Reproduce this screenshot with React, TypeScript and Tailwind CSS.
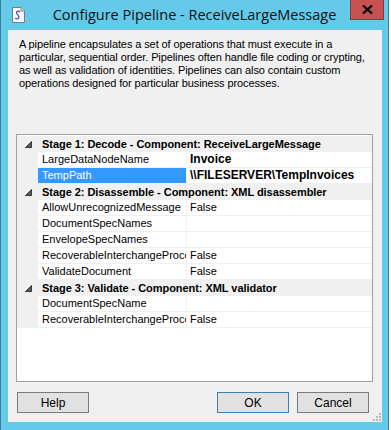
import React from "react";

type Row =
  | { kind: "h"; text: string }
  | { kind: "p"; name: string; value: string; bold?: boolean; sel?: boolean };

const rows: Row[] = [
  { kind: "h", text: "Stage 1: Decode - Component: ReceiveLargeMessage" },
  { kind: "p", name: "LargeDataNodeName", value: "Invoice", bold: true },
  { kind: "p", name: "TempPath", value: "\\\\FILESERVER\\TempInvoices", bold: true, sel: true },
  { kind: "h", text: "Stage 2: Disassemble - Component: XML disassembler" },
  { kind: "p", name: "AllowUnrecognizedMessage", value: "False" },
  { kind: "p", name: "DocumentSpecNames", value: "" },
  { kind: "p", name: "EnvelopeSpecNames", value: "" },
  { kind: "p", name: "RecoverableInterchangeProce", value: "False" },
  { kind: "p", name: "ValidateDocument", value: "False" },
  { kind: "h", text: "Stage 3: Validate - Component: XML validator" },
  { kind: "p", name: "DocumentSpecName", value: "" },
  { kind: "p", name: "RecoverableInterchangeProce", value: "False" },
];

function Tri() {
  return (
    <svg width="7" height="7" viewBox="0 0 7 7">
      <polygon points="6.5,0.5 6.5,6.5 0.5,6.5" fill="#5a5a5a" stroke="#3a3a3a" strokeWidth="1" />
    </svg>
  );
}

function DocIcon() {
  return (
    <svg width="13" height="16" viewBox="0 0 13 16">
      <path d="M0.5 0.5 H9 L12.5 4 V15.5 H0.5 Z" fill="#f4f7fb" stroke="#6f7f96" />
      <path d="M9 0.5 V4 H12.5" fill="#dfe6ee" stroke="#6f7f96" />
      <path d="M8 5 C6 3.5 3.5 4.5 5 7 C6 8.5 8 9 6.5 11 C5.5 12.5 3.5 12 3.5 11" fill="none" stroke="#3d5d96" strokeWidth="1.3" />
    </svg>
  );
}

function Grip() {
  return (
    <svg width="8" height="8" viewBox="0 0 8 8">
      {[
        [6, 0],
        [6, 3],
        [3, 3],
        [6, 6],
        [3, 6],
        [0, 6],
      ].map(([x, y], i) => (
        <rect key={i} x={x} y={y} width="2" height="2" fill="#b8b8b8" />
      ))}
    </svg>
  );
}

export default function App() {
  const font = { fontFamily: '"Liberation Sans", Arial, sans-serif' };
  return (
    <div className="w-[391px] h-[430px] bg-white flex" style={font}>
      <div className="w-[389px] h-[430px] bg-[#65c9ea] border-l border-r border-[#3b7f98] flex flex-col">
        {/* Title bar */}
        <div className="h-[30px] grid grid-cols-[1fr_auto_1fr] items-start">
          <div className="pl-[11px] pt-[7px]">
            <DocIcon />
          </div>
          <div
            className="pt-[5px] text-[14.5px] leading-[20px] text-[#111] whitespace-nowrap"
            style={{ fontFamily: '"Open Sans", "Noto Sans", sans-serif' }}
          >
            Configure Pipeline - ReceiveLargeMessage
          </div>
          <div className="flex justify-end pr-[4px]">
            <div className="w-[34px] h-[20px] bg-[#c75050] border border-t-0 border-[#8a3a3a] flex items-center justify-center">
              <svg width="11" height="9" viewBox="0 0 11 9">
                <path d="M1 0.5 L10 8.5 M10 0.5 L1 8.5" stroke="#000" strokeWidth="2.2" />
              </svg>
            </div>
          </div>
        </div>

        {/* Client area */}
        <div className="flex-1 ml-[7px] mr-[6px] mb-[8px] bg-[#f0f0f0] flex flex-col">
          <div className="pl-[11px] pt-[8px] text-[11px] leading-[13px] text-black h-[104px] tracking-[-0.1px]">
            <div>A pipeline encapsulates a set of operations that must execute in a</div>
            <div>particular, sequential order. Pipelines often handle file coding or crypting,</div>
            <div>as well as validation of identities. Pipelines can also contain custom</div>
            <div>operations designed for particular business processes.</div>
          </div>

          {/* Property grid */}
          <div className="ml-[8px] w-[357px] h-[248px] border border-[#a0a0a0] bg-white pt-[1px] text-[11px] leading-[15px]">
            {rows.map((r, i) =>
              r.kind === "h" ? (
                <div key={i} className="h-[16px] bg-[#f0f0f0] flex items-center">
                  <div className="w-[21px] h-[16px] flex items-center justify-end pr-[6px]">
                    <Tri />
                  </div>
                  <div className="pl-[4px] font-bold text-black whitespace-nowrap tracking-[-0.05px]">{r.text}</div>
                </div>
              ) : (
                <div key={i} className="h-[16px] flex bg-[#f0f0f0]">
                  <div className="w-[21px]" />
                  <div className="flex-1 flex border-b border-[#f0f0f0] bg-white">
                    <div
                      className={
                        "w-[148px] pl-[4px] whitespace-nowrap overflow-hidden " +
                        (r.sel ? "bg-[#3399ff] text-white" : "text-black")
                      }
                    >
                      {r.name}
                    </div>
                    <div className="w-px bg-[#f0f0f0]" />
                    <div
                      className={
                        "flex-1 pl-[3px] whitespace-nowrap text-black " +
                        (r.bold ? "font-bold text-[12px]" : "")
                      }
                    >
                      {r.value}
                    </div>
                  </div>
                </div>
              )
            )}
          </div>

          {/* Buttons */}
          <div className="flex items-end justify-between flex-1 pl-[9px]">
            <div className="mb-[9px] w-[72px] h-[21px] bg-[#e1e1e1] border border-[#7a7a7a] flex items-center justify-center text-[12px] text-black">
              Help
            </div>
            <div className="flex items-end">
              <div className="mb-[9px] w-[72px] h-[21px] bg-[#e1e1e1] border border-[#3c7fb1] flex items-center justify-center text-[12px] text-black">
                OK
              </div>
              <div className="mb-[9px] ml-[8px] w-[72px] h-[21px] bg-[#e1e1e1] border border-[#7a7a7a] flex items-center justify-center text-[12px] text-black">
                Cancel
              </div>
              <div className="ml-[4px] mr-[1px] mb-[1px]">
                <Grip />
              </div>
            </div>
          </div>
        </div>
      </div>
    </div>
  );
}
